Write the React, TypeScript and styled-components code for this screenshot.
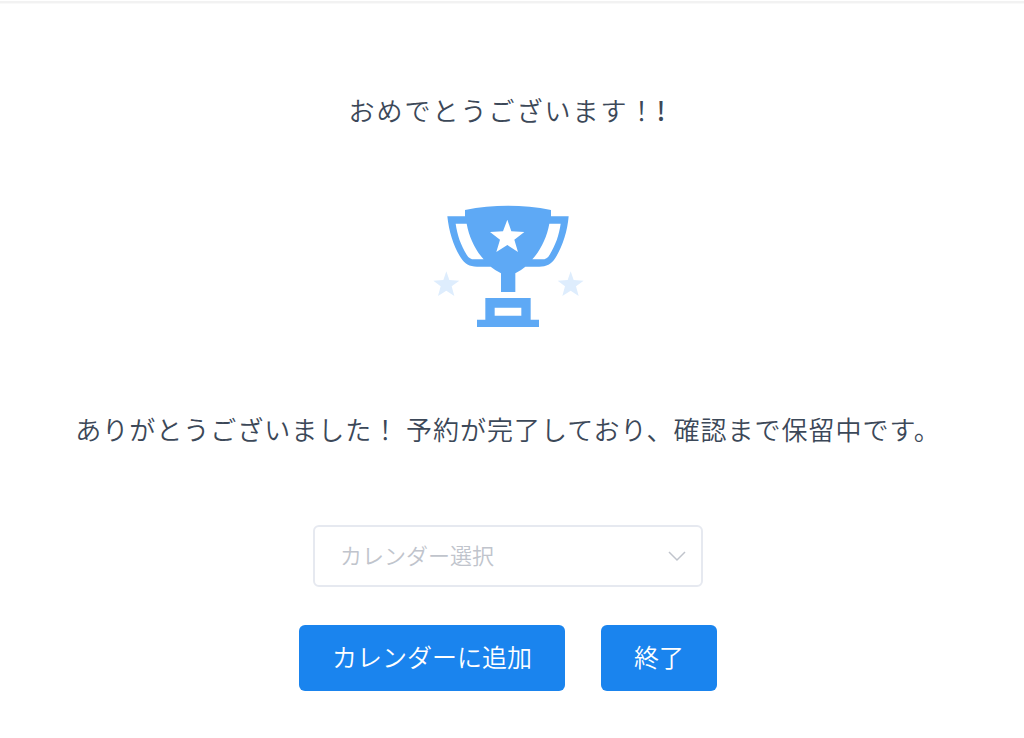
import React, { useState } from "react";
import styled, { createGlobalStyle } from "styled-components";

const GlobalStyle = createGlobalStyle`
  *, *::before, *::after { box-sizing: border-box; }
  body {
    margin: 0;
    background: #fff;
    color: #3c4858;
    font-family: "Noto Sans CJK JP", sans-serif;
    font-weight: 350;
  }
`;

const TopEdge = styled.header`
  height: 4px;
  background: linear-gradient(#fff 0 1px, #f2f2f2 1px 3px, #f9f9f9 3px);
`;

const Main = styled.main`
  display: flex;
  flex-direction: column;
  align-items: center;
  padding: 86px 16px 47px 8px;
`;

const Title = styled.h1`
  margin: 0;
  font-size: 26px;
  font-weight: 350;
  line-height: 40px;
  letter-spacing: 2px;
  text-align: center;
`;

const Accent = styled.span`
  font-weight: 500;
`;

const Trophy = styled.svg`
  display: block;
  width: 152px;
  height: 124px;
  margin: 74px 0 81px;
`;

const Message = styled.p`
  margin: 0 0 76px;
  font-size: 26px;
  line-height: 40px;
  letter-spacing: 1px;
  text-align: center;
`;

const SelectField = styled.div`
  position: relative;
  width: 100%;
  max-width: 390px;
  margin-bottom: 38px;
`;

const Select = styled.select`
  display: block;
  width: 100%;
  height: 62px;
  padding: 0 56px 4px 25px;
  appearance: none;
  border: 2px solid #e6e9f0;
  border-radius: 6px;
  background: #fff;
  color: #c0c4cc;
  font-family: inherit;
  font-size: 22px;
  font-weight: 350;
`;

const Chevron = styled.svg`
  position: absolute;
  top: 24px;
  right: 16px;
  width: 20px;
  height: 14px;
  pointer-events: none;
`;

const Actions = styled.div`
  display: flex;
  flex-wrap: wrap;
  justify-content: center;
  gap: 36px;
`;

const Button = styled.button`
  height: 66px;
  padding: 0 33px 4px;
  border: 0;
  border-radius: 6px;
  background: #1a84ee;
  color: #fff;
  font-family: inherit;
  font-size: 25px;
  font-weight: 350;
  line-height: 36px;
  cursor: pointer;
`;

export default function App() {
  const [calendar, setCalendar] = useState("");
  return (
    <>
      <GlobalStyle />
      <TopEdge />
      <Main>
        <Title>
          おめでとうございます！<Accent>!</Accent>
        </Title>
        <Trophy viewBox="36 42 456 372" aria-hidden="true">
          <path
            fill="#5ea9f5"
            fillRule="evenodd"
            d="M135 60Q264 35 393 60V79H446C442 126 427 171 406 204C394 223 379 230 358 230H316Q302 242 286 250V306H243V250Q227 242 212 230H171C148 230 134 221 123 204C101 171 87 126 82 79H135ZM107 101C112 136 122 164 140 194C146 204 153 208 163 208H191C166 180 148 144 140 101ZM388 101C380 144 362 180 337 208H366C377 208 383 204 389 194C407 164 417 136 422 101Z"
          />
          <path
            fill="#fff"
            d="M262 89L274 124L313 126L283 149L294 186L262 165L229 186L240 149L210 126L249 124Z"
          />
          <path
            fill="#5ea9f5"
            fillRule="evenodd"
            d="M196 324H332V389H357V411H171V389H196ZM224 353V377H304V353Z"
          />
          <path
            fill="#deedfd"
            d="M79 244L88 270L118 272L95 289L103 318L79 302L54 318L62 289L40 272L70 270Z"
          />
          <path
            fill="#deedfd"
            d="M452 244L461 270L491 272L468 289L476 318L452 302L427 318L435 289L413 272L443 270Z"
          />
        </Trophy>
        <Message>
          ありがとうございました！ 予約が完了しており、確認まで保留中です。
        </Message>
        <SelectField>
          <Select
            aria-label="カレンダー選択"
            value={calendar}
            onChange={(e) => setCalendar(e.target.value)}
          >
            <option value="">カレンダー選択</option>
          </Select>
          <Chevron viewBox="0 0 20 14" aria-hidden="true">
            <path d="M2 3L10 11L18 3" fill="none" stroke="#c0c4cc" strokeWidth="1.5" />
          </Chevron>
        </SelectField>
        <Actions>
          <Button type="button">カレンダーに追加</Button>
          <Button type="button">終了</Button>
        </Actions>
      </Main>
    </>
  );
}
